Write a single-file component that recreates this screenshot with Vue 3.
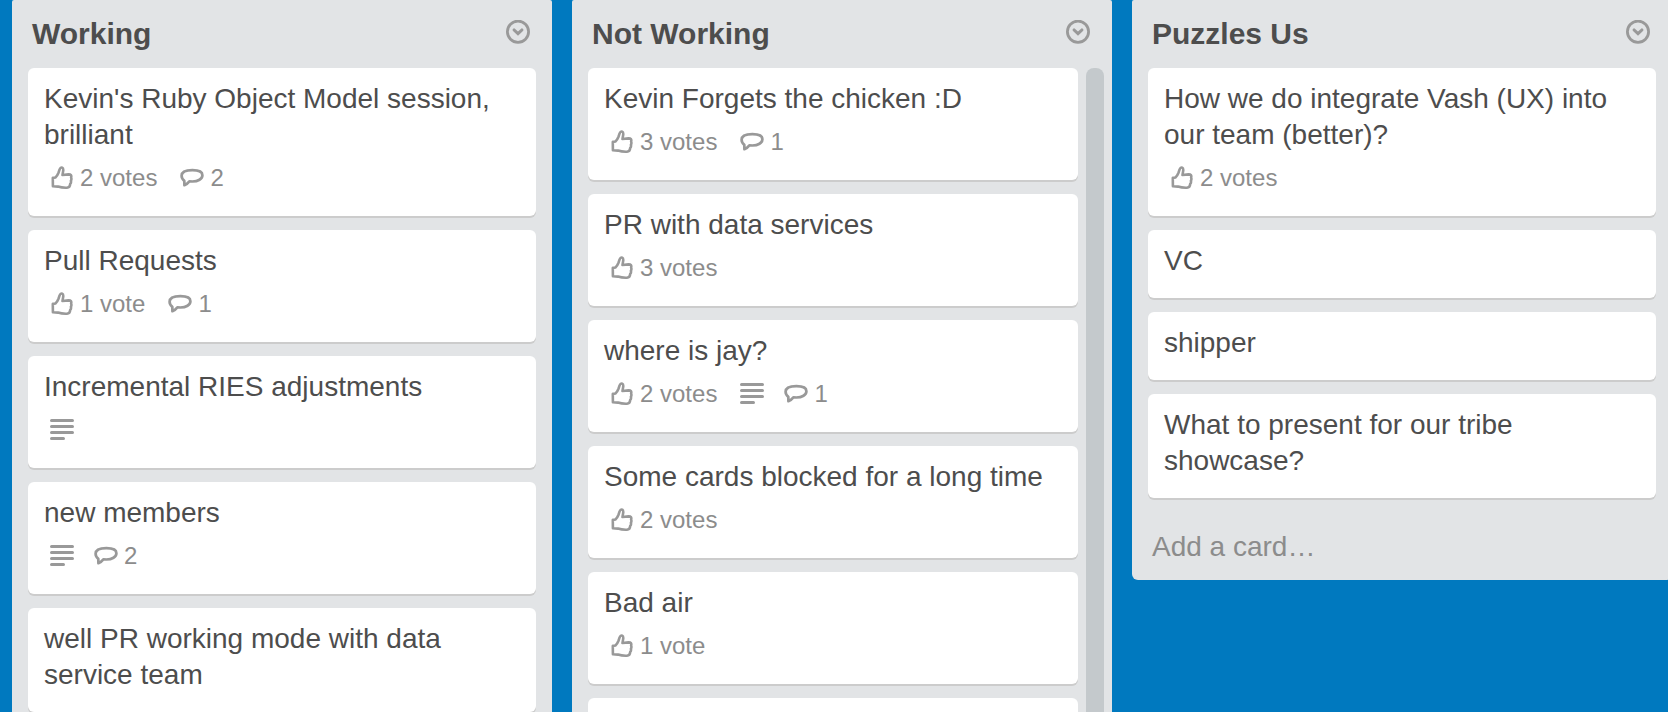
<script setup>
const lists = [
  {
    title: 'Working',
    full: true,
    cards: [
      { text: "Kevin's Ruby Object Model session, brilliant", votes: 2, comments: 2 },
      { text: 'Pull Requests', votes: 1, comments: 1 },
      { text: 'Incremental RIES adjustments', description: true },
      { text: 'new members', description: true, comments: 2 },
      { text: 'well PR working mode with data service team' },
    ],
  },
  {
    title: 'Not Working',
    full: true,
    scrollbar: true,
    cards: [
      { text: 'Kevin Forgets the chicken :D', votes: 3, comments: 1 },
      { text: 'PR with data services', votes: 3 },
      { text: 'where is jay?', votes: 2, description: true, comments: 1 },
      { text: 'Some cards blocked for a long time', votes: 2 },
      { text: 'Bad air', votes: 1 },
      { text: '' },
    ],
  },
  {
    title: 'Puzzles Us',
    cards: [
      { text: 'How we do integrate Vash (UX) into our team (better)?', votes: 2 },
      { text: 'VC' },
      { text: 'shipper' },
      { text: 'What to present for our tribe showcase?' },
    ],
  },
]

const voteLabel = (n) => (n === 1 ? '1 vote' : `${n} votes`)
</script>

<template>
  <main class="board">
    <section v-for="list in lists" :key="list.title" class="list" :class="{ full: list.full }">
      <header class="list-header">
        <h2>{{ list.title }}</h2>
        <button class="menu" type="button" :aria-label="`${list.title} list actions`">
          <svg class="icon" viewBox="0 0 24 24">
            <circle cx="12" cy="11.7" r="10.6" stroke-width="2.8" />
            <path d="M8.1 10 L12 13.7 L15.9 10" stroke-width="3.1" stroke-linecap="round" />
          </svg>
        </button>
      </header>

      <div class="list-body">
        <ul class="cards">
          <li v-for="(card, i) in list.cards" :key="i" class="card">
            <p class="card-text">{{ card.text }}</p>
            <div v-if="card.votes || card.description || card.comments" class="badges">
              <span v-if="card.votes" class="badge">
                <svg class="icon" viewBox="0 0 24 24" aria-hidden="true">
                  <path
                    d="M2.9 20.2 L2.8 11.9 L5.4 11.5 Q7.4 9.6 8.4 7 L9.6 3.4 Q10.6 1 12.2 1.7 Q13.7 2.5 13.1 5.4 L12.5 9 L18.6 8.4 Q22 8.5 21.1 11.4 Q21.8 13.2 20.9 14.8 Q21.4 16.8 20.2 18 Q20 21.6 17 21.7 Q12 21.9 8 20.6 Z"
                    stroke-width="2.6" stroke-linejoin="round" />
                </svg>
                <span class="count">{{ voteLabel(card.votes) }}</span>
              </span>
              <span v-if="card.description" class="badge">
                <svg class="icon" viewBox="0 0 24 24" aria-label="Has a description">
                  <path d="M1.5 2.5 H22.5 M1.5 8.5 H22.5 M1.5 14.5 H22.5 M1.5 20.5 H13.5"
                    stroke-width="3" stroke-linecap="round" />
                </svg>
              </span>
              <span v-if="card.comments" class="badge">
                <svg class="icon" viewBox="0 0 24 24" aria-label="Comments">
                  <path
                    d="M4.4 19.2 L4.3 14.9 C2.4 13.4 1.6 11.8 1.6 9.8 C1.6 6 6.3 4.2 12.4 4.2 C18.4 4.2 22.4 5.8 22.4 9.2 C22.4 13 18 15.4 12.4 15.5 L9.4 15.4 Q7.4 18 4.4 19.2 Z"
                    stroke-width="2.7" stroke-linejoin="round" />
                </svg>
                <span class="count">{{ card.comments }}</span>
              </span>
            </div>
          </li>
        </ul>
        <div v-if="list.scrollbar" class="scrollbar"></div>
      </div>

      <button v-if="!list.full" class="add-card" type="button">Add a card…</button>
    </section>
  </main>
</template>

<style>
body {
  margin: 0;
  background: #0079bf;
}
</style>

<style scoped>
.board {
  display: flex;
  align-items: flex-start;
  gap: 20px;
  height: 100vh;
  padding-left: 12px;
  box-sizing: border-box;
  overflow: hidden;
  background: #0079bf;
  color: #4d4d4d;
  font-family: "Helvetica Neue", "Liberation Sans", Arial, sans-serif;
  font-size: 28px;
  line-height: 36px;
}

.list {
  display: flex;
  flex: 1 0 540px;
  flex-direction: column;
  max-height: 100%;
  box-sizing: border-box;
  border-radius: 2px 2px 6px 6px;
  background: #e2e4e6;
}

.list.full {
  height: 100%;
  border-radius: 2px 2px 0 0;
}

.list-header {
  display: flex;
  flex: none;
  align-items: flex-start;
  justify-content: space-between;
  padding: 16px 22px 16px 20px;
}

h2 {
  margin: 0;
  font-size: 30px;
  font-weight: 700;
  line-height: 36px;
}

button {
  border: 0;
  background: none;
  font: inherit;
  cursor: pointer;
}

.menu {
  display: flex;
  align-items: center;
  height: 32px;
  padding: 0;
}

.icon {
  display: block;
  flex: none;
  width: 24px;
  height: 24px;
  fill: none;
  stroke: #999;
}

.list-body {
  display: flex;
  gap: 8px;
  min-height: 0;
  padding: 0 16px;
  overflow: hidden;
}

.list-body:has(.scrollbar) {
  padding-right: 8px;
}

.cards {
  flex: 1;
  min-width: 0;
  margin: 0;
  padding: 0;
  list-style: none;
}

.card {
  margin-bottom: 14px;
  padding: 13px 16px 19px;
  border-radius: 6px;
  background: #fff;
  box-shadow: 0 2px 0 #ccc;
}

.card-text {
  min-height: 36px;
  margin: 0;
}

.badges {
  display: flex;
  gap: 20px;
  padding: 7px 6px 1px;
  color: #8c8c8c;
  font-size: 24px;
}

.badge {
  display: flex;
  align-items: center;
  gap: 6px;
  height: 36px;
}

.count {
  padding-right: 3px;
}

.scrollbar {
  flex: none;
  width: 18px;
  border-radius: 8px 8px 0 0;
  background: #c4c9cc;
}

.add-card {
  flex: none;
  padding: 17px 20px 15px;
  color: #8c8c8c;
  text-align: left;
}
</style>
